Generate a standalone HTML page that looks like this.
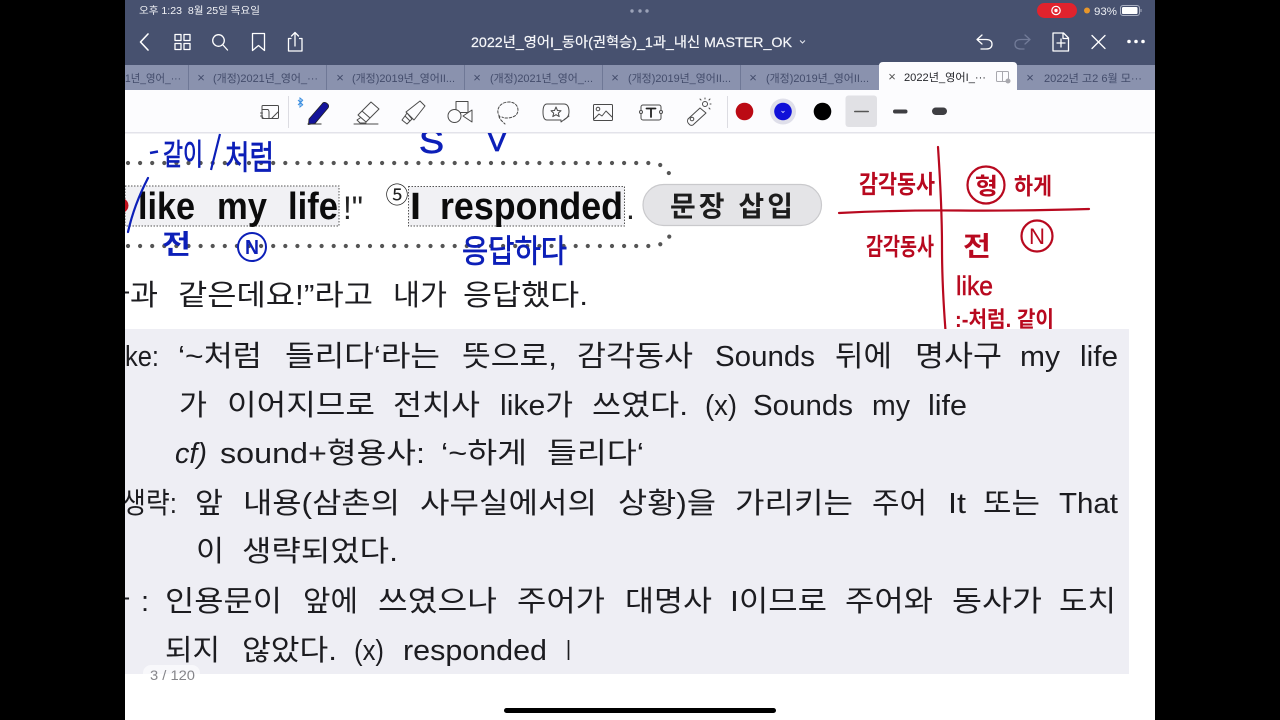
<!DOCTYPE html>
<html lang="ko"><head><meta charset="utf-8"><title>2022년_영어I_동아(권혁승)_1과_내신 MASTER_OK</title>
<style>
html,body{margin:0;padding:0;background:#000;width:1280px;height:720px;overflow:hidden}
svg{display:block;position:absolute;left:0;top:0}
text{font-family:"Liberation Sans","Noto Sans CJK KR",sans-serif}
.b text{font-size:29px;fill:#1c1c20}
.h text{font-size:38px;font-weight:700;fill:#0c0c0c}
.t text{font-size:11px;fill:#434c6b}
.x{font-size:13px;fill:#434c6b}
.ic{fill:none;stroke:#fff;stroke-width:1.3;stroke-linecap:round;stroke-linejoin:round}
.tb{fill:none;stroke:#4a4a4a;stroke-width:1;stroke-linecap:round;stroke-linejoin:round}
.blue text{fill:#0c1fb8;font-weight:700}
.blue text.th{font-weight:400;stroke:#0c1fb8;stroke-width:.7}
.red text{fill:#b8091f;font-weight:700}
</style></head><body>
<svg width="1280" height="720" viewBox="0 0 1280 720" xmlns="http://www.w3.org/2000/svg">
<rect width="1280" height="720" fill="#000"/>
<rect x="125" y="0" width="1030" height="720" fill="#fff"/>

<!-- top bars -->
<rect x="125" y="0" width="1030" height="65" fill="#47516f"/>
<rect x="125" y="65" width="1030" height="26" fill="#8a92ae"/>
<g fill="#6f7896"><rect x="188" y="65" width="1" height="25"/><rect x="326" y="65" width="1" height="25"/><rect x="464" y="65" width="1" height="25"/><rect x="602" y="65" width="1" height="25"/><rect x="740" y="65" width="1" height="25"/></g>
<rect x="125" y="90" width="1030" height="42" fill="#fcfcfe"/>
<rect x="125" y="132" width="1030" height="1.5" fill="#e3e3ea"/>
<path d="M879 91V66q0-4 4-4h130q4 0 4 4v25z" fill="#fcfcfe"/>

<!-- status bar -->
<text x="139" y="14" font-size="10" fill="#f2f3f7" textLength="121" lengthAdjust="spacingAndGlyphs">오후 1:23 &#160;8월 25일 목요일</text>
<g fill="#9ba2b8"><circle cx="632" cy="11" r="1.7"/><circle cx="640" cy="11" r="1.7"/><circle cx="647" cy="11" r="1.7"/></g>
<rect x="1037" y="3" width="40" height="15" rx="7.5" fill="#e1232d"/>
<circle cx="1056" cy="10.5" r="4.2" fill="none" stroke="#fff" stroke-width="1.2"/><circle cx="1056" cy="10.5" r="1.7" fill="#fff"/>
<circle cx="1087" cy="10.5" r="3" fill="#e8962a"/>
<text x="1094" y="15" font-size="11" fill="#eceef3" textLength="23" lengthAdjust="spacingAndGlyphs">93%</text>
<rect x="1120.500" y="5.500" width="19" height="10" rx="2.500" fill="none" stroke="#aab0c2" stroke-width="1"/>
<rect x="1122" y="7" width="15.500" height="7" rx="1.300" fill="#fff"/>
<rect x="1140.500" y="9" width="1" height="3" fill="#aab0c2"/>

<!-- nav icons -->
<g class="ic">
<path d="M148 34l-7.500 8 7.500 8" stroke-width="1.600"/>
<rect x="175" y="34.500" width="6" height="6"/><rect x="184" y="34.500" width="6" height="6"/><rect x="175" y="43.500" width="6" height="6"/><rect x="184" y="43.500" width="6" height="6"/>
<circle cx="218.500" cy="40.500" r="5.800"/><path d="M223 45l4.500 5"/>
<path d="M252.500 33.500h12v17l-6-5-6 5z"/>
<path d="M291 38.500h-2.500v12.500h13.500v-12.500h-2.500M295 46V33M291.500 36l3.500-3.500 3.500 3.500"/>
<path d="M982 35l-5 4.500 5 4.500M977 39.500h9q6 0 6 4.700t-6 4.800h-5"/>
<path d="M1025 35l5 4.500-5 4.500M1030 39.500h-9q-6 0-6 4.700t6 4.800h3" stroke="#727b98"/>
<path d="M1053.500 33h10l5 5v13h-15.500v-18zM1063 33v5.500h5.500M1061 39v8M1057 43h8"/>
<path d="M1092 35.500l13 13M1105 35.500l-13 13"/>
</g>
<g fill="#fff"><circle cx="1129" cy="41.500" r="1.800"/><circle cx="1136" cy="41.500" r="1.800"/><circle cx="1143" cy="41.500" r="1.800"/></g>
<text x="471" y="47" font-size="14" font-weight="400" fill="#f6f7fa" stroke="#f6f7fa" stroke-width=".2" textLength="321" lengthAdjust="spacingAndGlyphs">2022년_영어I_동아(권혁승)_1과_내신 MASTER_OK</text>
<path d="M800 40.500l2.500 2.500 2.500-2.500" fill="none" stroke="#e6e8ef" stroke-width="1"/>

<!-- tabs -->
<g class="t">
<text x="125" y="82" textLength="56" lengthAdjust="spacingAndGlyphs">1년_영어_···</text>
<text x="213" y="82" textLength="105" lengthAdjust="spacingAndGlyphs">(개정)2021년_영어_···</text>
<text x="352" y="82" textLength="103" lengthAdjust="spacingAndGlyphs">(개정)2019년_영어II...</text>
<text x="490" y="82" textLength="103" lengthAdjust="spacingAndGlyphs">(개정)2021년_영어_...</text>
<text x="628" y="82" textLength="103" lengthAdjust="spacingAndGlyphs">(개정)2019년_영어II...</text>
<text x="766" y="82" textLength="103" lengthAdjust="spacingAndGlyphs">(개정)2019년_영어II...</text>
<text x="904" y="81" textLength="82" lengthAdjust="spacingAndGlyphs" style="fill:#26272c">2022년_영어I_···</text>
<text x="1044" y="82" textLength="98" lengthAdjust="spacingAndGlyphs">2022년 고2 6월 모···</text>
</g>
<g class="x" text-anchor="middle">
<text x="201" y="82">×</text><text x="340" y="82">×</text><text x="477" y="82">×</text><text x="615" y="82">×</text><text x="753" y="82">×</text><text x="892" y="81" style="fill:#555">×</text><text x="1030" y="82">×</text>
</g>
<rect x="996.500" y="71.500" width="12" height="10" rx="1" fill="none" stroke="#a8a8ae"/><path d="M1002.500 71.500v10" stroke="#a8a8ae"/><circle cx="1008" cy="81" r="2.500" fill="#a8a8ae"/>

<!-- toolbar -->
<rect x="288" y="96" width="1" height="32" fill="#dcdce2"/>
<rect x="727" y="96" width="1" height="32" fill="#dcdce2"/>
<g class="tb">
<rect x="262" y="105.500" width="16.500" height="13" rx="1"/><path d="M278 112l-6 6"/><path d="M262 109.500h6a3 3 0 0 1 1 2v7h-5a3 3 0 0 1-2-2v-7zM260.500 113h2M260.500 116h2"/>
<path d="M358 115l13-13 8 7-13 13zM360 118l-3 2 3 3h6M362 111l8 7M354 124h24"/>
<path d="M406 112l14-11 5 5-11 14zM402 120l3-4 5 5-3 3zM405 116l2-3 5 6-2 2"/>
<rect x="456" y="101.500" width="12" height="11"/><circle cx="454.500" cy="116" r="6.500" fill="#fcfcfe"/><path d="M463 116l9-6v12z" fill="#fcfcfe"/>
<path d="M500 117c-5-6-1-15 9-15 9 0 11 9 7 13-3 3-11 4-14 2M499 116c0 3 4 6 6 8" stroke-dasharray="2.500 1.700"/>
<path d="M552 120h-5q-4 0-4-8t4-8h17q5 0 5 8 0 5-4 7l-4 3v-2z"/><path d="M556 107l1.500 3.500 3.500.3-2.700 2.300.9 3.500-3.200-1.900-3.200 1.900.9-3.500-2.700-2.300 3.500-.3z"/><path d="M564 120l5-4"/>
<rect x="593.500" y="104.500" width="19" height="16" rx="1"/><circle cx="598" cy="109" r="1.800"/><path d="M594 119l5-5 3 2 4-5 6 6"/>
<rect x="641" y="105" width="20" height="15" rx="2"/><path d="M646.500 108.500h9M651 108.500v8.500" stroke-width="1.800" stroke="#222"/><circle cx="641" cy="112" r="1.500" fill="#fcfcfe"/><circle cx="661" cy="112" r="1.500" fill="#fcfcfe"/>
<path d="M688 119l12-11 6 5-12 11a3 3 0 0 1-5 0 4 4 0 0 1-1-5z"/><circle cx="692" cy="119" r="1.800"/><circle cx="705" cy="104" r="2.500"/><path d="M705 99v-1M710 104h1M709 100l1-1M709 108l1 1M701 100l-1-1"/>
</g>
<path d="M309 119l13-15a3 3 0 0 1 5-.5 3 3 0 0 1 1 4.500l-13 15.500-6.500 1z" fill="#14149a" stroke="#222" stroke-width=".8"/>
<path d="M307.500 124h14" stroke="#333" stroke-width="1"/>
<path d="M300 98l2.500 2-2.500 2.500 2.500 2.500-2.500 2v-9zM298 100l5 5M298 105l5-5" fill="none" stroke="#3d8fe0" stroke-width="1"/>
<circle cx="744.500" cy="111.500" r="8.800" fill="#bb0a14"/>
<circle cx="783" cy="111.500" r="13" fill="#d9d9e6" opacity=".85"/><circle cx="783" cy="111.500" r="8.800" fill="#1010d8"/>
<path d="M781.500 111l1.500 1.500 1.500-1.500" fill="none" stroke="#dfe0ff" stroke-width=".8"/>
<circle cx="822.500" cy="111.500" r="8.800" fill="#000"/>
<rect x="845.500" y="95.500" width="31.500" height="31.500" rx="3" fill="#e1e1e5"/>
<rect x="854" y="110.700" width="15" height="1.600" rx=".8" fill="#555"/>
<rect x="893" y="109.500" width="14.500" height="4" rx="2" fill="#3e3e42"/>
<rect x="932" y="107.500" width="15" height="7.500" rx="3.700" fill="#3e3e42"/>

<!-- page content -->
<rect x="125" y="329" width="1004" height="345" fill="#eeeef4"/>

<!-- dotted frame -->
<path d="M128 163H650Q666 163 671 178" fill="none" stroke="#555" stroke-width="4.200" stroke-linecap="round" stroke-dasharray="0 12.100"/>
<path d="M128 246H650Q666 246 671 233" fill="none" stroke="#555" stroke-width="4.200" stroke-linecap="round" stroke-dasharray="0 12.100"/>

<!-- highlighted words -->
<rect x="125" y="186" width="214" height="40" fill="#f1f1f4" stroke="#555" stroke-width="1" stroke-dasharray="1.500 1.500"/>
<rect x="408.500" y="186.500" width="216" height="39.500" fill="#f1f1f4" stroke="#555" stroke-width="1" stroke-dasharray="1.500 1.500"/>
<g class="h">
<text x="138" y="219" textLength="57" lengthAdjust="spacingAndGlyphs">like</text>
<text x="217" y="219" textLength="50" lengthAdjust="spacingAndGlyphs">my</text>
<text x="288" y="219" textLength="50" lengthAdjust="spacingAndGlyphs">life</text>
<text x="410" y="219" textLength="11" lengthAdjust="spacingAndGlyphs">I</text>
<text x="440" y="219" textLength="183" lengthAdjust="spacingAndGlyphs">responded</text>
</g>
<text x="343" y="219" font-size="32" fill="#222" textLength="20" lengthAdjust="spacingAndGlyphs">!"</text>
<text x="626" y="219" font-size="32" fill="#222">.</text>
<text x="397" y="203" font-size="23" fill="#222" text-anchor="middle">⑤</text>

<!-- pill -->
<rect x="643" y="184.500" width="178.500" height="41" rx="20.500" fill="#e4e4e7" stroke="#c9c9cc" stroke-width="1.200"/>
<text x="670" y="216" font-size="28" font-weight="700" fill="#1d1d1d" textLength="123" lengthAdjust="spacing">문장 삽입</text>

<!-- Korean translation -->
<g class="b">
<text x="102" y="305" textLength="56" lengthAdjust="spacingAndGlyphs">가과</text>
<text x="178" y="305" textLength="195" lengthAdjust="spacingAndGlyphs">같은데요!”라고</text>
<text x="393" y="305" textLength="54" lengthAdjust="spacingAndGlyphs">내가</text>
<text x="463" y="305" textLength="125" lengthAdjust="spacingAndGlyphs">응답했다.</text>
</g>

<!-- explanation -->
<g class="b">
<text x="125" y="366" textLength="34" lengthAdjust="spacingAndGlyphs">ke:</text>
<text x="178" y="366" textLength="84" lengthAdjust="spacingAndGlyphs">‘~처럼</text>
<text x="285" y="366" textLength="155" lengthAdjust="spacingAndGlyphs">들리다‘라는</text>
<text x="462" y="366" textLength="95" lengthAdjust="spacingAndGlyphs">뜻으로,</text>
<text x="577" y="366" textLength="116" lengthAdjust="spacingAndGlyphs">감각동사</text>
<text x="715" y="366" textLength="100" lengthAdjust="spacingAndGlyphs">Sounds</text>
<text x="835" y="366" textLength="57" lengthAdjust="spacingAndGlyphs">뒤에</text>
<text x="915" y="366" textLength="87" lengthAdjust="spacingAndGlyphs">명사구</text>
<text x="1020" y="366" textLength="40" lengthAdjust="spacingAndGlyphs">my</text>
<text x="1080" y="366" textLength="38" lengthAdjust="spacingAndGlyphs">life</text>

<text x="179" y="415" textLength="28" lengthAdjust="spacingAndGlyphs">가</text>
<text x="227" y="415" textLength="148" lengthAdjust="spacingAndGlyphs">이어지므로</text>
<text x="393" y="415" textLength="87" lengthAdjust="spacingAndGlyphs">전치사</text>
<text x="500" y="415" textLength="73" lengthAdjust="spacingAndGlyphs">like가</text>
<text x="592" y="415" textLength="96" lengthAdjust="spacingAndGlyphs">쓰였다.</text>
<text x="705" y="415" textLength="32" lengthAdjust="spacingAndGlyphs">(x)</text>
<text x="753" y="415" textLength="100" lengthAdjust="spacingAndGlyphs">Sounds</text>
<text x="872" y="415" textLength="38" lengthAdjust="spacingAndGlyphs">my</text>
<text x="928" y="415" textLength="39" lengthAdjust="spacingAndGlyphs">life</text>

<text x="175" y="463" font-style="italic" textLength="32" lengthAdjust="spacingAndGlyphs">cf)</text>
<text x="220" y="463" textLength="205" lengthAdjust="spacingAndGlyphs">sound+형용사:</text>
<text x="441" y="463" textLength="86" lengthAdjust="spacingAndGlyphs">‘~하게</text>
<text x="547" y="463" textLength="97" lengthAdjust="spacingAndGlyphs">들리다‘</text>

<text x="122" y="513" textLength="55" lengthAdjust="spacingAndGlyphs">생략:</text>
<text x="195" y="513" textLength="28" lengthAdjust="spacingAndGlyphs">앞</text>
<text x="243" y="513" textLength="157" lengthAdjust="spacingAndGlyphs">내용(삼촌의</text>
<text x="420" y="513" textLength="177" lengthAdjust="spacingAndGlyphs">사무실에서의</text>
<text x="618" y="513" textLength="98" lengthAdjust="spacingAndGlyphs">상황)을</text>
<text x="735" y="513" textLength="118" lengthAdjust="spacingAndGlyphs">가리키는</text>
<text x="872" y="513" textLength="55" lengthAdjust="spacingAndGlyphs">주어</text>
<text x="948" y="513" textLength="18" lengthAdjust="spacingAndGlyphs">It</text>
<text x="983" y="513" textLength="57" lengthAdjust="spacingAndGlyphs">또는</text>
<text x="1059" y="513" textLength="59" lengthAdjust="spacingAndGlyphs">That</text>

<text x="196" y="561" textLength="28" lengthAdjust="spacingAndGlyphs">이</text>
<text x="242" y="561" textLength="156" lengthAdjust="spacingAndGlyphs">생략되었다.</text>

<text x="102" y="611" textLength="28" lengthAdjust="spacingAndGlyphs">가</text>
<text x="141" y="611">:</text>
<text x="165" y="611" textLength="117" lengthAdjust="spacingAndGlyphs">인용문이</text>
<text x="303" y="611" textLength="55" lengthAdjust="spacingAndGlyphs">앞에</text>
<text x="378" y="611" textLength="119" lengthAdjust="spacingAndGlyphs">쓰였으나</text>
<text x="517" y="611" textLength="88" lengthAdjust="spacingAndGlyphs">주어가</text>
<text x="625" y="611" textLength="87" lengthAdjust="spacingAndGlyphs">대명사</text>
<text x="730" y="611" textLength="97" lengthAdjust="spacingAndGlyphs">I이므로</text>
<text x="845" y="611" textLength="88" lengthAdjust="spacingAndGlyphs">주어와</text>
<text x="952" y="611" textLength="90" lengthAdjust="spacingAndGlyphs">동사가</text>
<text x="1059" y="611" textLength="57" lengthAdjust="spacingAndGlyphs">도치</text>

<text x="165" y="660" textLength="55" lengthAdjust="spacingAndGlyphs">되지</text>
<text x="242" y="660" textLength="95" lengthAdjust="spacingAndGlyphs">않았다.</text>
<text x="354" y="660" textLength="30" lengthAdjust="spacingAndGlyphs">(x)</text>
<text x="403" y="660" textLength="144" lengthAdjust="spacingAndGlyphs">responded</text>
<text x="566" y="660" textLength="5" lengthAdjust="spacingAndGlyphs">I</text>
</g>

<!-- page counter -->
<rect x="143" y="665" width="57" height="20" rx="8" fill="#fff" opacity=".6"/>
<text x="150" y="680" font-size="13.500" fill="#85858a" textLength="45" lengthAdjust="spacingAndGlyphs">3 / 120</text>

<!-- blue ink -->
<clipPath id="c1"><rect x="125" y="133" width="1030" height="200"/></clipPath>
<g class="blue" clip-path="url(#c1)">
<circle cx="121" cy="205.500" r="7.500" fill="#c0101c"/>
<path d="M148 178Q134 205 128 232" stroke="#0c1fb8" stroke-width="2.200" fill="none" stroke-linecap="round"/>
<path d="M150 153l8-1.500" stroke="#0c1fb8" stroke-width="2.500" fill="none"/>
<path d="M220 134l-9 36" stroke="#0c1fb8" stroke-width="2.200" fill="none"/>
<text class="th" x="163" y="165" font-size="30" textLength="40" lengthAdjust="spacingAndGlyphs">같이</text>
<text class="th" x="225" y="169" font-size="33" textLength="49" lengthAdjust="spacingAndGlyphs">처럼</text>
<text class="th" x="419" y="153" font-size="33" textLength="25" lengthAdjust="spacingAndGlyphs">S</text>
<text class="th" x="487" y="151" font-size="29" textLength="20" lengthAdjust="spacingAndGlyphs">V</text>
<text x="162" y="254" font-size="27" textLength="29" lengthAdjust="spacingAndGlyphs">전</text>
<circle cx="252" cy="247" r="14" fill="none" stroke="#0c1fb8" stroke-width="2"/>
<text x="245" y="254" font-size="20" textLength="14" lengthAdjust="spacingAndGlyphs">N</text>
<text class="th" x="462" y="262" font-size="32" textLength="105" lengthAdjust="spacingAndGlyphs">응답하다</text>
</g>

<!-- red ink -->
<clipPath id="c2"><rect x="820" y="133" width="335" height="196"/></clipPath>
<g class="red" clip-path="url(#c2)">
<path d="M938 147q4 60 4 100t4 90" fill="none" stroke="#b8091f" stroke-width="2.200" stroke-linecap="round"/>
<path d="M839 213q60-3 120-2.500t130-1.500" fill="none" stroke="#b8091f" stroke-width="2.200" stroke-linecap="round"/>
<text x="859" y="193" font-size="25" textLength="76" lengthAdjust="spacingAndGlyphs">감각동사</text>
<circle cx="986" cy="185" r="18.500" fill="none" stroke="#b8091f" stroke-width="2.200"/>
<text x="975" y="194" font-size="23" textLength="23" lengthAdjust="spacingAndGlyphs">형</text>
<text x="1014" y="194" font-size="23" textLength="38" lengthAdjust="spacingAndGlyphs">하게</text>
<text x="866" y="255" font-size="24" textLength="68" lengthAdjust="spacingAndGlyphs">감각동사</text>
<text x="963" y="256" font-size="27" textLength="28" lengthAdjust="spacingAndGlyphs">전</text>
<circle cx="1037" cy="236" r="15.500" fill="none" stroke="#b8091f" stroke-width="2.200"/>
<text x="1029" y="244" font-size="22" textLength="16" lengthAdjust="spacingAndGlyphs" style="font-weight:400">N</text>
<text x="956" y="295" font-size="27" textLength="37" lengthAdjust="spacingAndGlyphs" style="font-weight:400;stroke:#b8091f;stroke-width:.5">like</text>
<text x="955" y="327" font-size="22" textLength="99" lengthAdjust="spacingAndGlyphs">:-처럼. 같이</text>
</g>

<!-- home indicator -->
<rect x="504" y="708" width="272" height="5" rx="2.500" fill="#000"/>

<!-- letterbox covers -->
<rect x="0" y="0" width="125" height="720" fill="#000"/>
<rect x="1155" y="0" width="125" height="720" fill="#000"/>
</svg>
</body></html>
